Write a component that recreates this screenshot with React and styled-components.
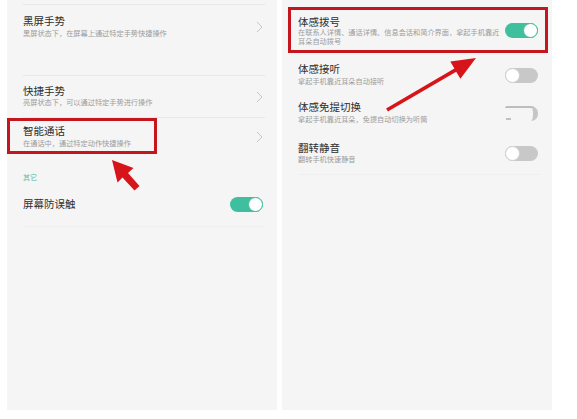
import React from "react";
import styled, { createGlobalStyle, css } from "styled-components";

const GlobalStyle = createGlobalStyle`
  html, body {
    margin: 0;
    padding: 0;
    background: #ffffff;
  }
  body {
    font-family: "Noto Sans CJK SC", "Noto Sans", sans-serif;
  }
`;

const Page = styled.div`
  position: relative;
  width: 577px;
  height: 419px;
  display: flex;
  gap: 5px;
  padding-left: 7px;
  box-sizing: border-box;
  overflow: hidden;
`;

const Panel = styled.div`
  position: relative;
  width: 270px;
  height: 410px;
  background: #f5f5f5;
  display: flex;
  flex-direction: column;
  padding: 0 ${(p) => p.$right}px 0 16px;
  box-sizing: border-box;
`;

const Divider = styled.div`
  height: 1px;
  background: ${(p) => (p.$faint ? "#efefef" : "#e8e8e8")};
  margin-top: ${(p) => p.$top || 0}px;
  margin-right: -2px;
`;

const Row = styled.div`
  height: ${(p) => p.$h}px;
  display: flex;
  align-items: center;
  justify-content: space-between;
  flex-shrink: 0;
`;

const Spacer = styled.div`
  height: ${(p) => p.$h}px;
  flex-shrink: 0;
`;

const TextBlock = styled.div`
  display: flex;
  flex-direction: column;
  max-width: 215px;
`;

const Title = styled.div`
  font-size: 10.5px;
  line-height: 12px;
  color: #2e2e2e;
`;

const Sub = styled.div`
  font-size: 7.2px;
  line-height: ${(p) => p.$lh || 11}px;
  color: #9c9c9c;
  margin-top: 0.5px;
`;

const Section = styled.div`
  font-size: 7px;
  line-height: 10px;
  color: #5fbaa2;
  margin-top: ${(p) => p.$top}px;
`;

const Track = styled.div`
  position: relative;
  width: 33px;
  height: 15px;
  border-radius: 8px;
  flex-shrink: 0;
  box-sizing: border-box;
  ${(p) =>
    p.$on
      ? css`
          background: #3fbf9d;
        `
      : p.$broken
      ? css`
          background: transparent;
          border-top: 2px solid #bdbdbd;
          border-right: 5px solid #c6c6c6;
          border-radius: 2px 7px 7px 2px;
        `
      : css`
          background: #c8c8c8;
        `}
`;

const Knob = styled.div`
  position: absolute;
  top: 0;
  ${(p) => (p.$on ? "right: 0;" : "left: 0;")}
  width: 15px;
  height: 15px;
  border-radius: 50%;
  background: #ffffff;
  box-sizing: border-box;
  border: 1px solid ${(p) => (p.$on ? "#3fbf9d" : "#cfcfcf")};
`;

const BrokenMark = styled.div`
  position: absolute;
  left: 1px;
  bottom: 1px;
  width: 5px;
  height: 2px;
  background: #c0c0c0;
`;

const Toggle = ({ on, broken }) => (
  <Track $on={on} $broken={broken}>
    {broken ? <BrokenMark /> : <Knob $on={on} />}
  </Track>
);

const Chevron = () => (
  <svg width="7" height="12" viewBox="0 0 7 12">
    <polyline
      points="1,1 6,6 1,11"
      fill="none"
      stroke="#c6c6c6"
      strokeWidth="1"
    />
  </svg>
);

const Highlight = styled.div`
  position: absolute;
  left: ${(p) => p.$x}px;
  top: ${(p) => p.$y}px;
  width: ${(p) => p.$w}px;
  height: ${(p) => p.$h}px;
  border: 3px solid #c4161c;
  box-sizing: border-box;
  pointer-events: none;
`;

const Overlay = styled.svg`
  position: absolute;
  left: 0;
  top: 0;
  pointer-events: none;
`;

const SettingRow = ({ h, title, sub, lh, right }) => (
  <Row $h={h}>
    <TextBlock>
      <Title>{title}</Title>
      {sub && <Sub $lh={lh}>{sub}</Sub>}
    </TextBlock>
    {right}
  </Row>
);

export default function App() {
  return (
    <>
      <GlobalStyle />
      <Page>
        <Panel $right={14}>
          <Divider $top={4} />
          <SettingRow
            h={44}
            title="黑屏手势"
            sub="黑屏状态下，在屏幕上通过特定手势快捷操作"
            right={<Chevron />}
          />
          <Spacer $h={26} />
          <Divider />
          <SettingRow
            h={41}
            title="快捷手势"
            sub="亮屏状态下，可以通过特定手势进行操作"
            right={<Chevron />}
          />
          <Divider />
          <SettingRow
            h={38}
            title="智能通话"
            sub="在通话中，通过特定动作快捷操作"
            right={<Chevron />}
          />
          <Section $top={16}>其它</Section>
          <SettingRow h={44} title="屏幕防误触" right={<Toggle on />} />
          <Divider $faint />
          <Highlight $x={0} $y={118} $w={150} $h={36} />
        </Panel>

        <Panel $right={14}>
          <Spacer $h={4} />
          <SettingRow
            h={53}
            title="体感拨号"
            sub="在联系人详情、通话详情、信息会话和简介界面，拿起手机靠近耳朵自动拨号"
            lh={8.5}
            right={<Toggle on />}
          />
          <SettingRow
            h={36}
            title="体感接听"
            sub="拿起手机靠近耳朵自动接听"
            right={<Toggle />}
          />
          <SettingRow
            h={40}
            title="体感免提切换"
            sub="拿起手机靠近耳朵，免提自动切换为听筒"
            right={<Toggle broken />}
          />
          <SettingRow
            h={41}
            title="翻转静音"
            sub="翻转手机快速静音"
            right={<Toggle />}
          />
          <Divider $faint />
          <Highlight $x={6} $y={7} $w={260} $h={46} />
        </Panel>

        <Overlay width="577" height="419" viewBox="0 0 577 419">
          <polygon
            points="112,160 133.5,168 128,173 139.5,186 134.5,190.5 122.5,177.5 117.5,182.5"
            fill="#d8141b"
          />
          <polygon
            points="476,58 460.4,78.7 456.2,71.7 387.9,111.6 386.1,108.4 454.4,68.5 450.3,61.5"
            fill="#d8141b"
          />
        </Overlay>
      </Page>
    </>
  );
}
